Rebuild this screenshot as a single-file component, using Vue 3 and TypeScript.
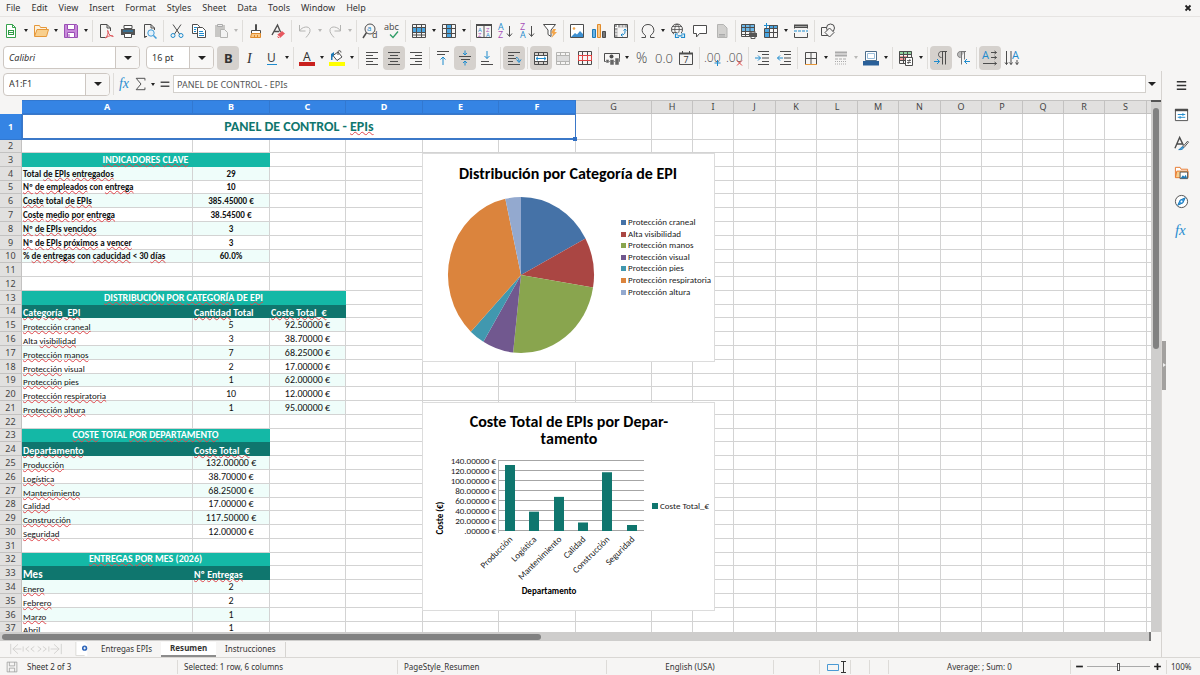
<script setup lang="ts">
interface Tool { id: string; label: string; caret?: boolean; active?: boolean; disabled?: boolean; sep?: boolean }
interface Cell { text: string; kind: string; span?: number }

const menus = ['File', 'Edit', 'View', 'Insert', 'Format', 'Styles', 'Sheet', 'Data', 'Tools', 'Window', 'Help']

const K = 'stroke="#4d4d4d" fill="none"'
const B = 'stroke="#1e8bcd" fill="none"'
const G = 'stroke="#b4b4b2" fill="none"'
const gridBox = (color: string) => `<path d="M1.5 1.5h13v13h-13zM1.5 5.5h13M1.5 10.5h13M5.5 1.5v13M10.5 1.5v13" fill="none" stroke="${color}"/>`
const letter = (x: number, y: number, size: number, color: string, text: string, extra = '') =>
  `<text x="${x}" y="${y}" font-size="${size}" fill="${color}" font-family="Open Sans, sans-serif" ${extra}>${text}</text>`

const icons: Record<string, string> = {
  new: `<path d="M3.5 1.500h6l3 3v10h-9z" fill="#fff" stroke="#37a24d"/><path d="M9.500 1.500v3h3" fill="none" stroke="#37a24d"/><path d="M5 7h6v5H5z" fill="#2f9c46"/><path d="M6 8.500h4M6 10.500h4" stroke="#fff"/>`,
  open: `<path d="M1.500 13V2.500h5l1 2h6V7" fill="#fdf1dc" stroke="#e6983a"/><path d="M1.500 13.500 4 6.500h11.500l-2 7z" fill="#f8cf8d" stroke="#e6983a"/>`,
  save: `<path d="M1.500 1.500h12l1 1v12h-13z" fill="#c889da" stroke="#9a4fb5"/><path d="M4.500 1.500h7v5h-7z" fill="#fff" stroke="#9a4fb5"/><path d="M4.500 9.500h7v5h-7z" fill="#fff" stroke="#9a4fb5"/><path d="M6 11v3" stroke="#9a4fb5"/>`,
  pdf: `<path d="M2.500 1.500h6.500l3.500 3.500v3M2.500 1.500v13h5" ${K}/><path d="M9 1.500v3.500h3.500" ${K}/><path d="M7.500 15c2-2 3-5 2.500-7 0-1-1-1 0 1 1 3 3 4 4.500 4.500s.5-1.200-1-1c-2 .2-4 1-6 2.500z" fill="none" stroke="#df5257"/>`,
  print: `<path d="M4 2.500h8v3H4z" fill="#fff" stroke="#4d4d4d"/><path d="M1 6h14v6H1z" fill="#545454"/><path d="M3 8h10" stroke="#1e8bcd" stroke-width="1"/><path d="M4.500 10.500h7v4h-7z" fill="#fff" stroke="#4d4d4d"/>`,
  preview: `<path d="M3.500 14.500h-1v-13H9L12.500 5v2" ${K}/><path d="M9 1.500V5h3.500M5 13.500H3" ${K}/><circle cx="9" cy="10" r="3.200" fill="#e4f1fb" stroke="#3f9bd8"/><path d="m11.500 12.500 3 3" stroke="#3f9bd8" stroke-width="1.500"/>`,
  cut: `<path d="M4 1.500 10.500 11M12 1.500 5.500 11" ${K}/><circle cx="4" cy="12.500" r="2" ${B}/><circle cx="12" cy="12.500" r="2" ${B}/>`,
  copy: `<path d="M1.500 1.500h5l2 2v7h-7z" fill="#fff" stroke="#4d4d4d"/><path d="M6.500 4.500h5l3 3v7h-8z" fill="#fff" stroke="#4d4d4d"/><path d="M3 4.500h3M3 6.500h2M3 8.500h2" ${B}/><path d="M8 8.500h4M8 10.500h5M8 12.500h5" ${B}/>`,
  paste: `<path d="M2 2h10v12H2z" fill="#c8c7c5"/><path d="M4.500 1.500h5v2h-5z" fill="#eee" stroke="#aaa"/><path d="M7.500 6.500h4l3 3v5h-7z" fill="#f3f3f3" stroke="#b4b4b2"/>`,
  brush: `<path d="M7.500 1.500h1v6h-1z" fill="#fff" stroke="#4d4d4d"/><path d="M3.500 7.500h9v3h-9z" fill="#fff" stroke="#4d4d4d"/><path d="M3.500 10.500h9v4h-10z" fill="#f9c98a" stroke="#e08a2a"/><path d="M6.500 12v2M9.500 12v2" stroke="#e08a2a"/>`,
  clear: `<path d="M2 12 7.500 2l3 7M4 8.500h5" ${K} stroke-width="1.400"/><path d="m7 12 5-4 3 2.500-5 4.500H8z" fill="#e7585f"/><path d="m7 12 3 2.500" stroke="#fff"/>`,
  undo: `<path d="M2.500 2v6h6" ${G}/><path d="M2.500 8C5 3.500 12 2.500 13 6.500c.6 3-2 5.500-4 8" ${G}/>`,
  redo: `<path d="M13.500 2v6h-6" ${G}/><path d="M13.500 8C11 3.500 4 2.500 3 6.500c-.6 3 2 5.500 4 8" ${G}/>`,
  find: `<circle cx="8" cy="6" r="5" ${K}/><path d="M4.500 9.500 1 15" ${K} stroke-width="1.500"/>${letter(5, 8, 8, '#1e8bcd', 'a')}${letter(10, 15, 9, '#444', 'd')}`,
  spell: `${letter(0, 7, 9, '#444', 'abc')}<path d="m6 11.500 3 3 5-6" fill="none" stroke="#2f9c66" stroke-width="1.300"/>`,
  row: `<path d="M1 5h14v4H1z" fill="#4aa5e0"/><path d="M1.500 1.500h13v13h-13zM1.500 4.500h13M1.500 9.500h13M1.500 12h13M5.500 1.500v13M10.500 1.500v13" ${K}/>`,
  col: `<path d="M5 1h5v14H5z" fill="#4aa5e0"/><path d="M1.500 1.500h13v13h-13zM1.500 5.500h13M1.500 10.500h13M5.500 1.500v13M10.500 1.500v13" ${K}/>`,
  sort: `<path d="M.5 1.500h15v13H.5zM8 1.500v13" ${K}/><path d="M0 1h16v2H0z" fill="#4d4d4d"/>${letter(2, 9, 6, '#1e8bcd', 'A')}${letter(2, 14, 6, '#a64fb8', 'Z')}${letter(10, 9, 6, '#a64fb8', 'Z')}${letter(10, 14, 6, '#1e8bcd', 'A')}`,
  az: `${letter(0, 7, 9, '#1e8bcd', 'A')}${letter(0, 15, 9, '#a64fb8', 'Z')}<path d="M11.500 3v10M9 10.500l2.500 3 2.500-3" ${K}/>`,
  za: `${letter(0, 7, 9, '#a64fb8', 'Z')}${letter(0, 15, 9, '#1e8bcd', 'A')}<path d="M11.500 3v10M9 10.500l2.500 3 2.500-3" ${K}/>`,
  filter: `<path d="M1.500 1.500h12L9 7v6.500l-3-2V7z" fill="#fff" stroke="#4d4d4d"/><path d="m11 6 3 0-1.500 3H15l-5.500 6 1.500-4.500H9z" fill="#f3a64b"/>`,
  image: `<path d="M1.500 1.500h13v13h-13z" fill="#fff" stroke="#4d4d4d"/><path d="m2 14 4-4 2 1.500 3-3.500 3 3v3z" fill="#3d8fd0"/><circle cx="5" cy="5.500" r="1.300" fill="#f3a64b"/>`,
  chart: `<path d="M1.500 6.500h3v8h-3z" fill="#6bb3e4" stroke="#1e7ab8"/><path d="M6.500 1.500h3v13h-3z" fill="#f9c98a" stroke="#e08a2a"/><path d="M11.500 8.500h3v6h-3z" fill="#777" stroke="#4d4d4d"/>`,
  pivot: `<path d="M1.500 1.500h13v13h-13z" ${K}/><path d="M2 2h12v2.500H2zM2 2h2.500v12H2z" fill="#a5a5a5"/><path d="M4.500 2v2.500M8 2v2.500M11 2v2.500M2 4.500h2.500M2 8h2.500M2 11h2.500" stroke="#fff"/><path d="M12 6v3c0 2-1.500 3-4 3M10.500 7.500 12 6l1.500 1.500M9.500 10.500 8 12l1.500 1.500" ${B}/>`,
  omega: `<path d="M1.500 14.500h4v-2C2.500 10.500 1.800 8 2.300 6 3 3 5 1.500 8 1.500S13 3 13.700 6c.5 2-.2 4.500-3.200 6.500v2h4" ${K}/>`,
  link: `<circle cx="7" cy="6.500" r="5.500" ${K}/><path d="M1.500 6.500h11M7 1c-3 3-3 8 0 11M7 1c3 3 3 8 0 11M2.500 3.500h9M2.500 9.500h5" ${K} stroke-width=".8"/><path d="M4 10h12v6H4z" fill="#f6f5f4"/><path d="M8 11H5.500v3.500H9M11 11h3.500v3.500H11M7.500 12.800h5" ${B} stroke-width="1.200"/>`,
  comment: `<path d="M1.500 2.500h13v8H7.500l-3 3.500v-3.500h-3z" fill="#fff" stroke="#4d4d4d"/>`,
  header: `<path d="M3.500 1.500h6l3.500 3.500v9.500H3.500z" fill="#d2d1cf" stroke="#b4b4b2"/><path d="M5 11.500h6M5 13h6" stroke="#aaa"/>`,
  printarea: `<path d="M1 1h13v7H1z" fill="#6db8e8"/><path d="M.5 1.500h13v12H.5zM.5 4.500h13M.5 8.500h13M4.500 1.500v12M9 1.500v12M.5 11.500h9" ${K}/><path d="M8 10h8v4H8z" fill="#555"/><path d="M10 8.500h4V10h-4zM10 13.500h4v2h-4z" fill="#fff" stroke="#555"/>`,
  freeze: `<path d="M2 5h4v10H2zM6 2h9v3H6z" fill="#4aa5e0"/><path d="M6.500 2.500h8v12h-13v-9M1.500 5.500h13M1.500 9.500h13M6.500 2v12.500M10.500 2v12.500" ${K}/><path d="M3.500 0v5M1 2.500h5" ${B}/>`,
  split: `<path d="M1.500 2.500h13v3M1.500 2.500v3M1.500 10v4.500h13V10M1.500 4.500h13" ${K}/><path d="M1 1.500h14v2H1z" fill="#4d4d4d"/><path d="M1 8h14" ${B} stroke-dasharray="3 1"/>`,
  shapes: `<path d="M1.500 4.500h7v8h-7z" ${K}/><circle cx="10.500" cy="5" r="4" fill="#f6f5f4" stroke="#4d4d4d"/><path d="m9.500 5 4.500 4.500L9.500 14 5 9.500z" fill="#f6f5f4" stroke="#4d4d4d"/>`,
  bold: `<text x="4" y="13" font-size="13" font-weight="700" fill="#333" font-family="Noto Sans, sans-serif">B</text>`,
  italic: `<text x="5" y="13" font-size="14" font-style="italic" fill="#333" font-family="Liberation Serif, serif">I</text>`,
  underline: `<text x="3" y="12" font-size="12" fill="#444" font-family="Noto Sans, sans-serif">U</text><path d="M3 14.500h10" stroke="#1e8bcd"/>`,
  fontcolor: `<text x="4" y="10.500" font-size="12" fill="#333" font-family="Noto Sans, sans-serif">A</text><path d="M0 12h16v4H0z" fill="#c9211e"/>`,
  highlight: `<path d="M0 12h16v4H0z" fill="#ffff00"/><path d="M4 5.500 9 2l4 5-5 3.500z" fill="#fff" stroke="#4d4d4d"/><path d="M9 5V1.500c1-1.500 3-1 3 1" ${K}/><path d="M2 10V4l3-2v3L3.500 7v3z" fill="#1e7ab8"/>`,
  left: `<path d="M2 2.500h12M2 5.500h7M2 8.500h12M2 11.500h7M2 14.500h12" ${K}/>`,
  center: `<path d="M2 2.500h12M4 5.500h8M2 8.500h12M4 11.500h8M2 14.500h12" ${K}/>`,
  right: `<path d="M2 2.500h12M7 5.500h7M2 8.500h12M7 11.500h7M2 14.500h12" ${K}/>`,
  top: `<path d="M2 1.500h12M2 4.500h8" ${K}/><path d="M8 15V7M5.500 9.500 8 7l2.500 2.500" ${B}/>`,
  middle: `<path d="M2 6.500h12M4 9.500h9" ${K}/><path d="M8 .5V5M6 3l2 2 2-2M8 15.500V11M6 13l2-2 2 2" ${B}/>`,
  bottom: `<path d="M2 11.500h8M2 14.500h12" ${K}/><path d="M8 1v7.500M5.500 6 8 8.500 10.500 6" ${B}/>`,
  wrap: `<path d="M2 2.500h12M2 5.500h6M2 8.500h8M2 11.500h5M2 14.500h12" ${K}/><path d="M10 7.500c2 0 3 1.500 3 4M10.500 9.500l2.500 3 2-3" ${B}/>`,
  merge: `<path d="M1 5h14v6H1z" fill="#fff"/><path d="M1.500 2.500h13v12h-13zM1.500 5.500h13M1.500 11.500h13M5.500 2.500v3M10.500 2.500v3M5.500 11.500v3M10.500 11.500v3" ${K}/><path d="M3 8.500h10M5 6.800 3 8.500l2 1.700M11 6.800l2 1.700-2 1.700" ${B}/>`,
  merge2: `<path d="M1 5h14v6H1z" fill="#ddd"/><path d="M1.500 2.500h13v12h-13zM1.500 5.500h13M1.500 11.500h13M5.500 2.500v3M10.500 2.500v3M5.500 11.500v3M10.500 11.500v3" ${G}/>`,
  unmerge: `${gridBox('#4d4d4d')}<path d="M1.500 6v5M14.500 6v5M1 5.500h14M1 10.500h14M5.500 6v5M10.500 6v5" fill="none" stroke="#e04343"/>`,
  currency: `<path d="M.5 3.500h15v8H.5z" ${K}/><circle cx="7.500" cy="6.500" r="2" fill="#4d4d4d"/><path d="M2 13V9.500h3V13zM6 15V9.500h4V15zM11 15V8h4v7z" fill="#666" stroke="#f6f5f4" stroke-width=".5"/>`,
  percent: letter(2, 13, 14, '#444', '%', 'font-weight="300"'),
  number: letter(-1, 13, 13, '#444', '0.0', 'font-weight="300"'),
  date: `<path d="M1.500 3.500h13v11h-13zM4.500 1v2M11.500 1v2" ${K}/><path d="M1 2.500h14v2H1z" fill="#4d4d4d"/>${letter(5.5, 13, 9, '#333', '7')}`,
  adddec: `${letter(-1, 12, 12, '#444', '.00', 'font-weight="300"')}<path d="M12.500 10v6M9.500 13h6" ${B}/>`,
  deldec: `${letter(-1, 12, 12, '#444', '.00', 'font-weight="300"')}<path d="m10 10.500 5 5M15 10.500l-5 5" fill="none" stroke="#e04343"/>`,
  indent: `<path d="M4 1.500h11M8 4.500h7M8 8h7M8 11.500h7M4 14.500h11" ${K}/><path d="M1 8h5.500M4 5.500 6.500 8 4 10.500" ${B}/>`,
  outdent: `<path d="M4 1.500h11M8 4.500h7M8 8h7M8 11.500h7M4 14.500h11" ${K}/><path d="M7 8H1.500M4 5.500 1.500 8 4 10.500" ${B}/>`,
  borders: `<path d="M2.500 14V2.500h11V14M8 2.500V14M2.500 8.500h11" ${K}/><path d="M2 14.500h12" stroke="#e6983a"/>`,
  lines: `<path d="M2 2.500h12M2 5.500h12" stroke="#aaa" stroke-width="2"/><path d="M2 9h12" stroke="#aaa" stroke-dasharray="3 1"/><path d="M2 11.500h12M2 14h12" stroke="#aaa" stroke-dasharray="1 1"/>`,
  linecolor: `<path d="M2.500 1.500h11v9h-11z" fill="#fff" stroke="#4d6d8a"/><path d="M4.500 3.500h7v5h-7z" fill="none" stroke="#9abfdd"/><path d="M0 11h16v4.500H0z" fill="#2a6099"/>`,
  cond: `<path d="M1 1h13v3H1z" fill="#8fd19e"/><path d="M1 6h9v4H1z" fill="#f19a9a"/><path d="M1.500 1.500h12v12h-12zM1.500 4.500h12M1.500 7.500h12M1.500 10.500h12M5.500 1.500v12M9.500 1.500v12" ${K}/><path d="M7.500 7.500h7v8h-7z" fill="#fff" stroke="#4d4d4d"/><path d="M9 10.500h4M9 12.500h4M12 9l-2 5" ${K} stroke-width=".8"/>`,
  ltr: `<path d="M14 1.500H8.500c-4 0-4 6 0 6M9.500 1.500v13M12.500 1.500v13" ${K}/><path d="M1 11.500h5.500M4 9l2.500 2.500L4 14" ${B}/>`,
  rtl: `<path d="M10 1.500H5.500c-4 0-4 6 0 6z" fill="#bbb"/><path d="M11 1.500H5.500c-4 0-4 6 0 6M6.500 1.500v13M9.500 1.500v8" fill="none" stroke="#777"/><path d="M15 11.500H9.500M12 9l-2.500 2.500L12 14" ${B}/>`,
  horiz: `${letter(0, 9, 11, '#1e8bcd', 'A')}<path d="M9 2.500h5.500M9 7.500h5.500M1 13.500h13.500M12.500 1l2 1.500-2 1.500M12.500 6l2 1.500-2 1.500M12.500 12l2 1.500-2 1.500" ${K}/>`,
  vert: `${letter(8, 9, 11, '#1e8bcd', 'A')}<path d="M2.500 1v13.500M7 1v13.500M13 10v4.500M1 12.500l1.500 2 1.500-2M5.500 12.500l1.500 2 1.500-2M11.500 12.500l1.500 2 1.500-2" ${K}/>`,
  props: `<path d="M1.500 2.500h13v12h-13z" fill="#fff" stroke="#4d4d4d"/><path d="M1 2h14v2.500H1z" fill="#4d4d4d"/><path d="M4 8h8M4 11h8M9.500 6.500v3M6.500 9.500v3" ${B}/>`,
  styles: `<path d="M1 13 6 1.500 10 10M3 8.500h5.500" ${K} stroke-width="1.500"/><path d="m9 12 5.500-6.500 1 1-5 6z" fill="#fff" stroke="#4d4d4d"/><path d="M5 14.500c2 0 2-3 4.500-3 1.500 1 0 3.500-4.500 3z" fill="#5ba9e0" stroke="#1e7ab8"/>`,
  gallery: `<path d="M1.500 13V2.500h5l1 2h7V7" fill="#fff" stroke="#e6762b"/><path d="M1.500 13.500 3 6.500h12v7z" fill="#f8cf8d" stroke="#e6762b"/><path d="M6.500 7.500h8v7h-8z" fill="#fff" stroke="#4d4d4d"/><path d="m7 14 2.500-3 1.500 1.500 1.500-2 1.500 3.500z" fill="#1e7ab8"/>`,
  navigator: `<circle cx="8" cy="8" r="6.500" fill="#fff" stroke="#4d4d4d"/><path d="m12 4-2.500 5.500L4 12l2.500-5.500z" fill="#3d9be0" stroke="#1e7ab8"/><circle cx="8" cy="8" r="1" fill="#fff"/>`,
  fx: `<text x="1" y="13" font-size="16" font-style="italic" fill="#2a8dd0" font-family="Liberation Serif, serif">fx</text>`,
  sum: `<path d="M12.500 4V1.500h-10L8 8l-5.500 6.500h10V12" ${K} stroke-width="1.100"/>`,
  equals: `<path d="M3 6h10M3 10.500h10" stroke="#4d4d4d" stroke-width="1.600"/>`,
  menu: `<path d="M3 4h10M3 8h10M3 12h10" stroke="#333" stroke-width="1.500"/>`,
  disk: `<path d="M1.500 1.500h13v13h-13zM4.500 1.500v5h7v-5M4.500 14.500v-5h7v5" fill="none" stroke="#999"/>`,
}

const t = (id: string, label: string, opt: Partial<Tool> = {}): Tool => ({ id, label, ...opt })
const sep: Tool = { id: 'sep', label: '', sep: true }

const standardBar: Tool[] = [
  t('new', 'New', { caret: true }), t('open', 'Open', { caret: true }), t('save', 'Save', { caret: true }), sep,
  t('pdf', 'Export as PDF'), t('print', 'Print'), t('preview', 'Print Preview'), sep,
  t('cut', 'Cut'), t('copy', 'Copy'), t('paste', 'Paste', { caret: true, disabled: true }), sep,
  t('brush', 'Clone Formatting'), t('clear', 'Clear Formatting'), sep,
  t('undo', 'Undo', { caret: true, disabled: true }), t('redo', 'Redo', { caret: true, disabled: true }), sep,
  t('find', 'Find and Replace'), t('spell', 'Spelling'), sep,
  t('row', 'Row', { caret: true }), t('col', 'Column', { caret: true }), sep,
  t('sort', 'Sort'), t('az', 'Sort Ascending'), t('za', 'Sort Descending'), t('filter', 'AutoFilter'), sep,
  t('image', 'Insert Image'), t('chart', 'Insert Chart'), t('pivot', 'Pivot Table'), sep,
  t('omega', 'Special Character', { caret: true }), t('link', 'Hyperlink'), t('comment', 'Comment'), t('header', 'Headers and Footers', { disabled: true }), sep,
  t('printarea', 'Define Print Area'), t('freeze', 'Freeze Rows and Columns', { caret: true }), t('split', 'Split Window'), sep,
  t('shapes', 'Draw Functions'),
]

const formatBar: Tool[] = [
  t('bold', 'Bold', { active: true }), t('italic', 'Italic'), t('underline', 'Underline', { caret: true }), sep,
  t('fontcolor', 'Font Color', { caret: true }), t('highlight', 'Background Color', { caret: true }), sep,
  t('left', 'Align Left'), t('center', 'Center Horizontally', { active: true }), t('right', 'Align Right'), sep,
  t('top', 'Align Top'), t('middle', 'Center Vertically', { active: true }), t('bottom', 'Align Bottom'), sep,
  t('wrap', 'Wrap Text', { active: true }), sep,
  t('merge', 'Merge and Center', { active: true }), t('merge2', 'Merge Cells', { disabled: true }), t('unmerge', 'Unmerge Cells'), sep,
  t('currency', 'Format as Currency', { caret: true }), t('percent', 'Format as Percent'), t('number', 'Format as Number'), t('date', 'Format as Date'), sep,
  t('adddec', 'Add Decimal Place'), t('deldec', 'Delete Decimal Place'), sep,
  t('indent', 'Increase Indent'), t('outdent', 'Decrease Indent'), sep,
  t('borders', 'Borders', { caret: true }), t('lines', 'Border Style', { caret: true, disabled: true }), t('linecolor', 'Border Color', { caret: true }), sep,
  t('cond', 'Conditional Formatting', { caret: true }), sep,
  t('ltr', 'Left-To-Right', { active: true }), t('rtl', 'Right-To-Left'), sep,
  t('horiz', 'Text Direction Horizontal', { active: true }), t('vert', 'Text Direction Vertical'),
]

const sidebarTools = [
  t('menu', 'Sidebar Settings'), t('props', 'Properties'), t('styles', 'Styles'),
  t('gallery', 'Gallery'), t('navigator', 'Navigator'), t('fx', 'Functions'),
]

const columns = 'ABCDEFGHIJKLMNOPQRS'.split('')
// Enough rows to reach the bottom of the window.
const rowCount = Math.max(37, Math.ceil((window.innerHeight - 183) / 13.8) + 1)

// A leading "~" on a word marks it as unknown to the spelling checker.
const sheet: Record<number, Cell[]> = {
  1: [{ text: 'PANEL DE CONTROL - ~EPIs', kind: 'title', span: 6 }],
  3: [{ text: '~INDICADORES ~CLAVE', kind: 'band', span: 2 }],
  13: [{ text: '~DISTRIBUCIÓN ~POR ~CATEGORÍA DE ~EPI', kind: 'band', span: 3 }],
  14: [{ text: '~Categoría_EPI', kind: 'head' }, { text: '~Cantidad Total', kind: 'head' }, { text: '~Coste ~Total_€', kind: 'head' }],
  23: [{ text: '~COSTE TOTAL ~POR ~DEPARTAMENTO', kind: 'band', span: 2 }],
  24: [{ text: '~Departamento', kind: 'head' }, { text: '~Coste ~Total_€', kind: 'head' }],
  32: [{ text: '~ENTREGAS ~POR MES (2026)', kind: 'band', span: 2 }],
  33: [{ text: 'Mes', kind: 'head large' }, { text: '~Nº ~Entregas', kind: 'head' }],
}

const fill = (start: number, rows: string[][], label: string, value: string) => {
  rows.forEach((r, i) => {
    const stripe = i % 2 === 0 ? ' stripe' : ''
    sheet[start + i] = r.map((text, c) => ({ text, kind: (c === 0 ? label : value) + stripe }))
  })
}

fill(4, [
  ['Total ~de ~EPIs ~entregados', '29'],
  ['~Nº ~de ~empleados con ~entrega', '10'],
  ['~Coste total ~de ~EPIs', '385.45000 €'],
  ['~Coste ~medio ~por ~entrega', '38.54500 €'],
  ['~Nº ~de ~EPIs ~vencidos', '3'],
  ['~Nº ~de ~EPIs ~próximos a ~vencer', '3'],
  ['% ~de ~entregas con ~caducidad < 30 ~días', '60.0%'],
], 'key', 'keyvalue')

const categories = [
  { name: 'Protección craneal', marked: '~Protección ~craneal', count: 5, cost: '92.50000 €', color: '#4572a7' },
  { name: 'Alta visibilidad', marked: 'Alta ~visibilidad', count: 3, cost: '38.70000 €', color: '#aa4643' },
  { name: 'Protección manos', marked: '~Protección ~manos', count: 7, cost: '68.25000 €', color: '#89a54e' },
  { name: 'Protección visual', marked: '~Protección visual', count: 2, cost: '17.00000 €', color: '#71588f' },
  { name: 'Protección pies', marked: '~Protección pies', count: 1, cost: '62.00000 €', color: '#4198af' },
  { name: 'Protección respiratoria', marked: '~Protección ~respiratoria', count: 10, cost: '12.00000 €', color: '#db843d' },
  { name: 'Protección altura', marked: '~Protección ~altura', count: 1, cost: '95.00000 €', color: '#93a9cf' },
]
fill(15, categories.map(c => [c.marked, String(c.count), c.cost]), 'label', 'value')

const departments = [
  { name: 'Producción', cost: 132 }, { name: 'Logística', cost: 38.7 }, { name: 'Mantenimiento', cost: 68.25 },
  { name: 'Calidad', cost: 17 }, { name: 'Construcción', cost: 117.5 }, { name: 'Seguridad', cost: 12 },
]
fill(25, departments.map(d => ['~' + d.name, d.cost.toFixed(5) + ' €']), 'label', 'value')
fill(34, [['~Enero', '2'], ['~Febrero', '2'], ['~Marzo', '1'], ['~Abril', '1']], 'label', 'value')

// The extra empty cell closes the row with the column that runs out of view.
const cellsOf = (row: number): Cell[] => {
  const cells = sheet[row] ?? []
  const used = cells.reduce((n, c) => n + (c.span ?? 1), 0)
  return [...cells, ...Array.from({ length: columns.length + 1 - used }, () => ({ text: '', kind: '' }))]
}
const words = (text: string) => text.split(' ').map(w => ({ text: w.replace('~', ''), bad: w.startsWith('~') }))

// Pie slices run clockwise from twelve o'clock.
const total = categories.reduce((n, c) => n + c.count, 0)
let turned = 0
const slices = categories.map(c => {
  const from = (turned / total) * Math.PI * 2
  turned += c.count
  const to = (turned / total) * Math.PI * 2
  const at = (a: number) => `${(98 + 73 * Math.sin(a)).toFixed(2)} ${(122 - 78 * Math.cos(a)).toFixed(2)}`
  return { color: c.color, d: `M98 122L${at(from)}A73 78 0 ${to - from > Math.PI ? 1 : 0} 1 ${at(to)}Z` }
})
const ticks = [140, 120, 100, 80, 60, 40, 20, 0].map(v => ({ y: 129 - v / 2, label: (v ? v.toFixed(5) : '.00000') + ' €' }))
const bars = departments.map((d, i) => ({ name: d.name, x: 82 + Math.round(i * 24.3), h: d.cost / 2 }))
</script>

<template>
  <div class="app">
    <nav class="menubar">
      <button v-for="m in menus" :key="m" type="button">{{ m }}</button>
      <button class="close" type="button" aria-label="Close document">
        <svg viewBox="0 0 8 8"><path d="m1.500 1.500 5 5m0-5-5 5" stroke="#222" stroke-width="1.800" /></svg>
      </button>
    </nav>

    <div class="toolbar">
      <template v-for="(b, i) in standardBar" :key="i">
        <span v-if="b.sep" class="sep"></span>
        <template v-else>
          <button class="tool" :class="{ dim: b.disabled }" type="button" :aria-label="b.label" :disabled="b.disabled">
            <svg viewBox="0 0 16 16" v-html="icons[b.id]"></svg>
          </button>
          <button v-if="b.caret" class="caret" :class="{ dim: b.disabled }" type="button" :aria-label="b.label + ' options'"></button>
        </template>
      </template>
    </div>

    <div class="toolbar">
      <div class="combo font-combo">
        <input class="italic" value="Calibri" aria-label="Font name" />
        <button type="button" class="drop" aria-label="Font list"></button>
      </div>
      <div class="combo size-combo">
        <input value="16 pt" aria-label="Font size" />
        <button type="button" class="drop" aria-label="Size list"></button>
      </div>
      <template v-for="(b, i) in formatBar" :key="i">
        <span v-if="b.sep" class="sep"></span>
        <template v-else>
          <button class="tool" :class="{ active: b.active, dim: b.disabled }" type="button" :aria-label="b.label" :disabled="b.disabled">
            <svg viewBox="0 0 16 16" v-html="icons[b.id]"></svg>
          </button>
          <button v-if="b.caret" class="caret" :class="{ dim: b.disabled }" type="button" :aria-label="b.label + ' options'"></button>
        </template>
      </template>
    </div>

    <div class="body">
      <main class="work">
        <div class="formula">
          <div class="combo name-combo">
            <input value="A1:F1" aria-label="Name box" />
            <button type="button" class="drop" aria-label="Named ranges"></button>
          </div>
          <span class="sep"></span>
          <button class="mini" type="button" aria-label="Function wizard"><svg viewBox="0 0 16 16" v-html="icons.fx"></svg></button>
          <button class="mini" type="button" aria-label="Sum"><svg viewBox="0 0 16 16" v-html="icons.sum"></svg></button>
          <button class="caret" type="button" aria-label="Sum options"></button>
          <button class="mini" type="button" aria-label="Formula"><svg viewBox="0 0 16 16" v-html="icons.equals"></svg></button>
          <input class="formula-input" value="PANEL DE CONTROL - EPIs" aria-label="Input line" />
          <button class="drop expand" type="button" aria-label="Expand formula bar"></button>
        </div>

        <div class="sheet-area">
          <div class="sheet">
            <table>
              <colgroup>
                <col class="w-head" />
                <col v-for="c in columns" :key="c" :class="'w-' + c" />
                <col class="w-rest" />
              </colgroup>
              <thead>
                <tr>
                  <th class="corner"></th>
                  <th v-for="(c, i) in columns" :key="c" scope="col" :class="{ picked: i < 6 }">{{ c }}</th>
                  <th></th>
                </tr>
              </thead>
              <tbody>
                <tr v-for="r in rowCount" :key="r">
                  <th scope="row" :class="{ picked: r === 1 }">{{ r }}</th>
                  <td v-for="(cell, i) in cellsOf(r)" :key="i" :class="cell.kind" :colspan="cell.span">
                    <template v-for="(w, k) in words(cell.text)" :key="k">{{ k ? ' ' : '' }}<span :class="{ bad: w.bad }">{{ w.text }}</span></template>
                  </td>
                </tr>
              </tbody>
            </table>

            <figure class="chart first">
              <svg viewBox="0 1 292 208">
                <text class="chart-title" x="145" y="26">Distribución por Categoría de EPI</text>
                <path v-for="s in slices" :key="s.color" :d="s.d" :fill="s.color" />
                <g v-for="(c, i) in categories" :key="c.name">
                  <rect x="198" :y="67 + Math.round(i * 11.6)" width="5" height="5" :fill="c.color" />
                  <text class="small" x="205" :y="72 + Math.round(i * 11.6)">{{ c.name }}</text>
                </g>
              </svg>
            </figure>

            <figure class="chart second">
              <svg viewBox="0 1 292 208">
                <text class="chart-title" x="146" y="25">Coste Total de EPIs por Depar-</text>
                <text class="chart-title" x="146" y="42">tamento</text>
                <g v-for="k in ticks" :key="k.y">
                  <path :d="`M75 ${k.y - 0.5}H221`" stroke="#a6a6a6" />
                  <text class="small end" x="73" :y="k.y + 3">{{ k.label }}</text>
                </g>
                <path d="M75.500 59v72" stroke="#b3b3b3" />
                <g v-for="b in bars" :key="b.name">
                  <rect :x="b.x" :y="129 - b.h" width="10" :height="b.h" fill="#0f766e" />
                  <text class="small end" :transform="`translate(${b.x + 8} 138) rotate(-45)`">{{ b.name }}</text>
                </g>
                <text class="axis" transform="translate(20 116) rotate(-90)">Coste (€)</text>
                <text class="axis" x="126" y="192">Departamento</text>
                <rect x="229" y="101" width="6" height="6" fill="#0f766e" />
                <text class="small" x="237" y="107">Coste Total_€</text>
              </svg>
            </figure>
          </div>
          <div class="vscroll"><span></span></div>
        </div>
        <div class="hscroll"><span></span></div>

        <div class="tabs">
          <svg class="tabnav" viewBox="0 0 60 14">
            <path d="M.5 1v12M9 1.500 3 7l6 5.500M3 7h10M22 4l-4 3 4 3M28 4l-4 3 4 3M32 4l4 3-4 3M38 4l4 3-4 3M47 7h10M51 1.500 57 7l-6 5.500M59.500 1v12M15 4v6M45 4v6" fill="none" stroke="#cfcecb" />
          </svg>
          <button class="addtab" type="button" aria-label="Add sheet">
            <svg viewBox="0 0 16 16"><path d="M1 0h10l3 3v13H1z" fill="#fff" /><path d="M1 0v15.500h10" fill="none" stroke="#d8d7d4" /><circle cx="11" cy="7" r="3" fill="#2b63b8" /><path d="M11 5.500v3M9.500 7h3" stroke="#fff" /></svg>
          </button>
          <button class="tab" type="button">Entregas EPIs</button>
          <button class="tab current" type="button">Resumen</button>
          <button class="tab last" type="button">Instrucciones</button>
        </div>
      </main>

      <aside class="sidebar">
        <span class="grip"></span>
        <button v-for="s in sidebarTools" :key="s.id" type="button" :aria-label="s.label">
          <svg viewBox="0 0 16 16" v-html="icons[s.id]"></svg>
        </button>
      </aside>
    </div>

    <footer class="status">
      <span class="s-doc"><svg viewBox="0 0 16 16" v-html="icons.disk"></svg>Sheet 2 of 3</span>
      <span class="s-sel">Selected: 1 row, 6 columns</span>
      <span class="s-style">PageStyle_Resumen</span>
      <span class="s-lang">English (USA)</span>
      <span class="s-gap"></span>
      <span class="s-mode">
        <svg viewBox="0 0 22 14"><path d="M1.500 4.500h11v6h-11z" fill="none" stroke="#4a9ad4" /><path d="M15 1.500h5M17.500 1.500v11M15 12.500h5" stroke="#333" /></svg>
      </span>
      <span class="s-tiny"></span>
      <span class="s-tiny"></span>
      <span class="s-avg">Average: ; Sum: 0</span>
      <span class="s-zoom">
        <button type="button" aria-label="Zoom out"><svg viewBox="0 0 8 8"><path d="M1 4h6" stroke="#222" stroke-width="1.500" /></svg></button>
        <input type="range" min="0" max="100" value="50" aria-label="Zoom" />
        <button type="button" aria-label="Zoom in"><svg viewBox="0 0 8 8"><path d="M1 4h6M4 1v6" stroke="#222" stroke-width="1.500" /></svg></button>
      </span>
      <span class="s-pct">100%</span>
    </footer>
  </div>
</template>

<style>
body { margin: 0; }
</style>

<style scoped>
.app {
  height: 100vh;
  display: flex;
  flex-direction: column;
  overflow: hidden;
  background: #f6f5f4;
  color: #333;
  font: 9px/12px "Noto Sans", sans-serif;
}
.app *, .app *::before, .app *::after { box-sizing: border-box; }
button, input { font: inherit; color: inherit; margin: 0; padding: 0; border: 0; background: none; }
svg { display: block; overflow: visible; }

.menubar { flex: none; display: flex; gap: 11px; height: 17px; padding: 0 6px; border-bottom: 1px solid #e6e4e2; }
.close { margin-left: auto; width: 12px; }
.close svg { width: 8px; height: 8px; margin: 0 auto; }

.toolbar { flex: none; display: flex; align-items: center; height: 27px; }
.tool { flex: none; width: 22px; height: 24px; border-radius: 4px; display: grid; place-items: center; }
.tool svg { width: 16px; height: 16px; }
.tool.active { background: #d5d1cd; }
.sep { flex: none; width: 5px; height: 22px; background: linear-gradient(#dfddda, #dfddda) center / 1px 100% no-repeat; }
.caret { flex: none; width: 8px; height: 22px; display: grid; place-items: center; }
.caret::before { content: ""; border: 2px solid transparent; border-top: 3px solid #222; border-bottom: 0; }
.caret.dim::before { border-top-color: #b9b8b6; }

.combo { flex: none; display: flex; height: 23px; border: 1px solid #cdc7c2; border-radius: 4px; background: #fff; overflow: hidden; }
.combo input { flex: 1; min-width: 0; padding-left: 5px; }
.combo .italic { font-style: italic; }
.font-combo { width: 137px; margin-left: 3px; }
.size-combo { width: 68px; margin: 0 3px 0 6px; }
.name-combo { width: 107px; margin-left: 3px; }
.drop { flex: none; width: 24px; display: grid; place-items: center; }
.combo .drop { border-left: 1px solid #cdc7c2; background: #f8f7f6; }
.drop::before { content: ""; border: 4px solid transparent; border-top: 4px solid #222; border-bottom: 0; }

.body { flex: 1; min-height: 0; display: flex; }
.work { flex: 1; min-width: 0; display: flex; flex-direction: column; }
.formula { flex: none; display: flex; align-items: center; height: 29px; padding-bottom: 3px; }
.formula > .sep { width: 7px; }
.mini { flex: none; width: 16px; height: 22px; display: grid; place-items: center; }
.mini svg { width: 14px; height: 14px; }
.formula-input { flex: 1; min-width: 0; height: 18px; padding-left: 3px; border: 1px solid #d3d0cc; background: #fff; color: #555; }
.expand { width: 12px; margin-right: 3px; }

.sheet-area { flex: 1; min-height: 0; display: flex; }
.sheet { position: relative; flex: 1; min-width: 0; overflow: hidden; background: #fff; }
table { table-layout: fixed; width: 100%; border-collapse: separate; border-spacing: 0; }
col { width: 41px; }
.w-head { width: 22px; }
.w-A { width: 171px; }
.w-B, .w-D, .w-F { width: 77px; }
.w-C, .w-E, .w-G { width: 76px; }
.w-J, .w-N, .w-S { width: 42px; }
.w-rest { width: auto; }
th, td { white-space: nowrap; padding: 0 1px; border: 0 solid #d3d3d3; border-width: 0 1px 1px 0; }
th { background: #e1e0df; color: #444; font: 9px/12px "Noto Sans", sans-serif; padding: 0; text-align: center; border-color: #c3c2c1; }
thead th { height: 14px; border-top: 1px solid #c3c2c1; }
th.picked { background: #3584e4; color: #fff; font-weight: 700; border-color: #3278d0; }
th.corner { background: #f6f5f4; border-color: transparent; }
th:last-child, td:last-child { padding: 0; border-right: 0; }
td { font: 10px/12px Carlito, Lato, sans-serif; color: #111; vertical-align: middle; }
tbody tr { height: 14px; }
tbody tr:nth-child(2), tbody tr:nth-child(9n + 5), tbody tr:nth-child(9n + 1) { height: 13px; }
tbody tr:nth-child(1) { height: 26px; }
.title { position: relative; color: #0f766e; font-size: 14px; line-height: 20px; font-weight: 700; text-align: center; border: 1px solid #3b78c8; border-width: 1px 1px 2px 1px; }
.title::after { content: ""; position: absolute; right: -2px; bottom: -3px; width: 4px; height: 4px; background: #2f6fc4; }
.band { background: #14b8a6; border-color: #14b8a6; color: #fff; font-weight: 700; text-align: center; }
.head { background: #0f766e; border-color: #0f766e; color: #fff; font-weight: 700; padding-top: 4px; line-height: 8px; }
.large { font-size: 11px; }
.key { font-size: 9px; font-weight: 700; }
.keyvalue { font-size: 9px; font-weight: 700; text-align: center; }
.label { font-size: 9px; padding-top: 4px; line-height: 8px; }
.value { text-align: center; }
.stripe { background: #effdfa; }
.bad { text-decoration: underline wavy #e0464b 1px; text-decoration-skip-ink: none; text-underline-offset: 0; }

.chart { position: absolute; left: 422px; width: 293px; height: 209px; margin: 0; background: #fff; border: 1px solid #dcdcdc; font-family: Carlito, Lato, sans-serif; }
.chart svg { width: 292px; height: 208px; }
.first { top: 53px; }
.second { top: 302px; }
.chart-title { font-size: 16px; font-weight: 700; text-anchor: middle; fill: #000; }
.small { font-size: 9px; fill: #222; }
.axis { font-size: 9px; font-weight: 700; text-anchor: middle; fill: #000; }
.end { text-anchor: end; }

.vscroll { flex: none; width: 10px; background: #cfcecd; padding: 6px 2px 0; border-top: 2px solid #555; }
.vscroll span { display: block; height: 46%; border-radius: 4px; background: #818181; }
.hscroll { flex: none; height: 9px; margin-right: 10px; padding: 2px 0 1px 2px; background: #cecdcc; border-right: 2px solid #777; }
.hscroll span { display: block; width: 47%; height: 6px; border-radius: 4px; background: #818181; }

.tabs { flex: none; display: flex; align-items: center; height: 16px; padding-left: 6px; font-size: 8px; }
.tabnav { width: 60px; height: 12px; }
.addtab { width: 14px; height: 15px; margin: 0 3px 0 9px; }
.addtab svg { width: 14px; height: 14px; }
.tab { height: 15px; padding: 0 9px; }
.tab.current { background: #fff; font-weight: 700; border-bottom: 2px solid #8c8c8c; }
.tab.last { border-right: 1px solid #d6d4d1; }

.sidebar { position: relative; flex: none; width: 39px; display: flex; flex-direction: column; align-items: center; border-left: 1px solid #d6d3d0; }
.sidebar button { flex: none; width: 28px; height: 29px; display: grid; place-items: center; }
.sidebar svg { width: 15px; height: 15px; }
.grip { position: absolute; left: 0; top: 46%; width: 4px; height: 49px; background: #a3a19f; display: grid; place-items: center; }
.grip::before { content: ""; border: 2px solid transparent; border-left: 3px solid #eee; border-right: 0; }

.status { flex: none; display: flex; align-items: center; height: 18px; border-top: 1px solid #d9d7d4; font-size: 8px; }
.status > span { height: 14px; min-width: 0; display: flex; align-items: center; white-space: nowrap; border-right: 1px solid #dddbd8; padding-left: 6px; }
.status > .s-doc { flex: 178 1 178px; gap: 9px; }
.s-doc svg { width: 12px; height: 12px; }
.status > .s-sel { flex: 220 1 220px; }
.status > .s-style { flex: 209 1 209px; }
.status > .s-lang { flex: 167 1 167px; justify-content: center; padding: 0; }
.status > .s-gap { flex: 46 1 46px; }
.status > .s-mode { flex: 31 1 31px; }
.s-mode svg { width: 22px; height: 14px; }
.status > .s-tiny { flex: 19 1 19px; }
.status > .s-avg { flex: 182 1 182px; justify-content: center; padding: 0; }
.status > .s-zoom { flex: 96 1 96px; padding: 0 4px; gap: 3px; }
.s-zoom button { flex: none; }
.s-zoom svg { width: 9px; height: 9px; }
.s-zoom input { flex: 1; min-width: 0; height: 12px; appearance: none; background: linear-gradient(#aaa, #aaa) center / 100% 1px no-repeat; }
.s-zoom input::-webkit-slider-thumb { appearance: none; width: 3px; height: 8px; border: 1px solid #555; background: #fff; }
.status > .s-pct { flex: 33 1 33px; padding-left: 4px; border: 0; }
</style>
